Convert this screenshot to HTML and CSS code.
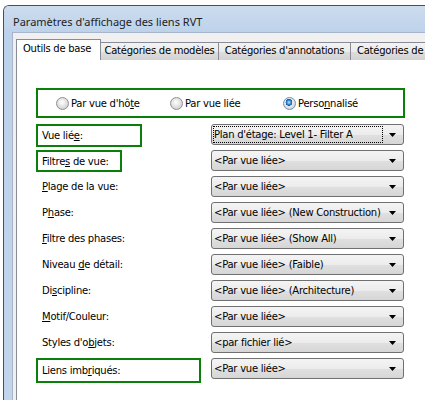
FILE: index.html
```html
<!DOCTYPE html>
<html lang="fr">
<head>
<meta charset="utf-8">
<title>Paramètres d'affichage des liens RVT</title>
<link rel="stylesheet" href="styles.css">
</head>
<body>
<div class="window">
  <div class="titlebar">Paramètres d'affichage des liens RVT</div>
  <div class="client">
    <div class="tabs">
      <div class="tab active t1">Outils de base</div>
      <div class="tab t2">Catégories de modèles</div>
      <div class="tab t3">Catégories d'annotations</div>
      <div class="tab t4">Catégories de modèles analytiques</div>
    </div>
    <div class="panel">
      <div class="radiobox">
        <label class="radio r1"><span class="dot"></span><span>Par vue d'hô<u>t</u>e</span></label>
        <label class="radio r2"><span class="dot"></span><span>Par vue liée</span></label>
        <label class="radio r3"><span class="dot on"></span><span>Perso<u>n</u>nalisé</span></label>
      </div>
      <div class="form">
        <div class="lbl hl hl-a"><span>Vue lié<u>e</u>:</span></div>
        <div class="dd"><span class="val focus">Plan d'étage: Level 1- Filter A</span><span class="arr"><svg width="7" height="4" viewBox="0 0 7 4"><path d="M0 0H7L3.5 4Z"/></svg></span></div>

        <div class="lbl hl hl-b"><span>Filtre<u>s</u> de vue:</span></div>
        <div class="dd"><span class="val">&lt;Par vue liée&gt;</span><span class="arr"><svg width="7" height="4" viewBox="0 0 7 4"><path d="M0 0H7L3.5 4Z"/></svg></span></div>

        <div class="lbl"><span><u>P</u>lage de la vue:</span></div>
        <div class="dd"><span class="val">&lt;Par vue liée&gt;</span><span class="arr"><svg width="7" height="4" viewBox="0 0 7 4"><path d="M0 0H7L3.5 4Z"/></svg></span></div>

        <div class="lbl"><span>P<u>h</u>ase:</span></div>
        <div class="dd"><span class="val">&lt;Par vue liée&gt; (New Construction)</span><span class="arr"><svg width="7" height="4" viewBox="0 0 7 4"><path d="M0 0H7L3.5 4Z"/></svg></span></div>

        <div class="lbl"><span><u>F</u>iltre des phases:</span></div>
        <div class="dd"><span class="val">&lt;Par vue liée&gt; (Show All)</span><span class="arr"><svg width="7" height="4" viewBox="0 0 7 4"><path d="M0 0H7L3.5 4Z"/></svg></span></div>

        <div class="lbl"><span>Niveau <u>d</u>e détail:</span></div>
        <div class="dd"><span class="val">&lt;Par vue liée&gt; (Faible)</span><span class="arr"><svg width="7" height="4" viewBox="0 0 7 4"><path d="M0 0H7L3.5 4Z"/></svg></span></div>

        <div class="lbl"><span>Di<u>s</u>cipline:</span></div>
        <div class="dd"><span class="val">&lt;Par vue liée&gt; (Architecture)</span><span class="arr"><svg width="7" height="4" viewBox="0 0 7 4"><path d="M0 0H7L3.5 4Z"/></svg></span></div>

        <div class="lbl"><span><u>M</u>otif/Couleur:</span></div>
        <div class="dd"><span class="val">&lt;Par vue liée&gt;</span><span class="arr"><svg width="7" height="4" viewBox="0 0 7 4"><path d="M0 0H7L3.5 4Z"/></svg></span></div>

        <div class="lbl"><span>Styles d'o<u>b</u>jets:</span></div>
        <div class="dd"><span class="val">&lt;par fichier lié&gt;</span><span class="arr"><svg width="7" height="4" viewBox="0 0 7 4"><path d="M0 0H7L3.5 4Z"/></svg></span></div>

        <div class="lbl hl hl-c"><span>Liens imb<u>r</u>iqués:</span></div>
        <div class="dd"><span class="val">&lt;Par vue liée&gt;</span><span class="arr"><svg width="7" height="4" viewBox="0 0 7 4"><path d="M0 0H7L3.5 4Z"/></svg></span></div>
      </div>
    </div>
  </div>
</div>
</body>
</html>
```

FILE: styles.css
```css
html, body {
  margin: 0;
  padding: 0;
}
body {
  width: 425px;
  height: 400px;
  overflow: hidden;
  background: #ffffff;
  font-family: "DejaVu Sans", Verdana, sans-serif;
  font-size: 10px;
  letter-spacing: -0.25px;
  color: #000;
}
.window {
  margin: 5px 0 0 3px;
  width: 640px;
  height: 420px;
  border-top: 1px solid #4b4f55;
  border-left: 1px solid #4b4f55;
  border-top-left-radius: 6px;
  background: linear-gradient(to bottom, #c6d8ed 0, #bcd1ea 30px, #c2d5eb 100%);
  box-sizing: border-box;
}
.titlebar {
  height: 26px;
  box-sizing: border-box;
  padding: 7px 0 0 9px;
  line-height: 18px;
  font-family: "Noto Sans", "Open Sans", sans-serif;
  font-size: 11px;
  letter-spacing: 0;
  color: #1e1e1e;
  background: linear-gradient(to bottom, #cddcee, #bdd2ea);
  border-top-left-radius: 5px;
}
.client {
  margin-left: 8px;
  height: 400px;
  border-top: 1px solid #a7b6ca;
  border-left: 1px solid #a7b6ca;
  background: #f0f0f0;
  padding: 6px 0 0 3px;
  box-sizing: border-box;
}
.tabs {
  display: flex;
  align-items: flex-end;
  height: 21px;
}
.tab {
  flex: none;
  box-sizing: border-box;
  height: 18px;
  border: 1px solid #898c95;
  border-bottom: none;
  background: linear-gradient(to bottom, #f3f3f3 0%, #ebebeb 50%, #dedede 51%, #d2d2d2 100%);
  line-height: 16px;
  text-align: center;
  white-space: nowrap;
  font-size: 10px;
  margin-left: -1px;
}
.tab.active {
  position: relative;
  z-index: 1;
  height: 21px;
  background: #ffffff;
  line-height: 18px;
  margin-left: 0;
  text-align: left;
  padding-left: 6px;
}
.t1 { width: 85px; }
.t2 { width: 119px; }
.t3 { width: 133px; }
.t4 { width: 190px; text-align: left; padding-left: 6px; }
.panel {
  margin-top: -1px;
  border: 1px solid #898c95;
  background: #ffffff;
  padding: 28px 0 40px 19px;
  height: 360px;
  box-sizing: border-box;
}
.radiobox {
  box-sizing: border-box;
  width: 369px;
  height: 30px;
  border: 2px solid #0a800a;
  display: flex;
  align-items: center;
  padding-left: 18px;
}
.radio {
  display: flex;
  align-items: center;
  flex: none;
  white-space: nowrap;
}
.r1 { width: 114px; }
.r2 { width: 113px; }
.dot {
  width: 13px;
  height: 13px;
  box-sizing: border-box;
  border-radius: 50%;
  border: 1px solid #8f9092;
  background: radial-gradient(circle at 45% 40%, #ffffff 0, #eaeaea 35%, #cfcfcf 80%, #c4c4c4 100%);
  margin-right: 2px;
  flex: none;
}
.dot.on {
  background:
    radial-gradient(circle at 45% 40%, #c4e8ff 0, #3f97e0 20%, #1a56a4 36%, transparent 40%),
    radial-gradient(circle at 45% 40%, #ffffff 0, #eaeaea 45%, #cfcfcf 80%, #c4c4c4 100%);
  border-color: #6f8fb0;
}
.form {
  margin-top: 6px;
  display: grid;
  grid-template-columns: 175px 193px;
  grid-auto-rows: 21px;
  row-gap: 5px;
}
.lbl {
  align-self: start;
  box-sizing: border-box;
  height: 21px;
  border: 2px solid transparent;
  padding-left: 4px;
  display: flex;
  align-items: center;
  white-space: nowrap;
}
.hl { border-color: #0a800a; }
.hl-a { width: 106px; height: 23px; }
.hl-b { width: 86px; height: 22px; }
.hl-c { width: 165px; height: 25px; }
.dd {
  box-sizing: border-box;
  height: 21px;
  border: 1px solid #707070;
  border-radius: 3px;
  padding: 1px;
  display: flex;
  align-items: center;
  background: linear-gradient(to bottom, #f4f4f4 0%, #ececec 50%, #e0e0e0 51%, #d6d6d6 100%);
}
.val {
  flex: 1;
  box-sizing: border-box;
  height: 17px;
  border: 1px solid transparent;
  line-height: 15px;
  white-space: nowrap;
  overflow: hidden;
}
.val.focus {
  border: 1px dotted #000;
}
.arr {
  flex: none;
  width: 19px;
  display: flex;
  justify-content: center;
  align-items: center;
}
.arr svg { display: block; }
.arr path { fill: #000; }
```
